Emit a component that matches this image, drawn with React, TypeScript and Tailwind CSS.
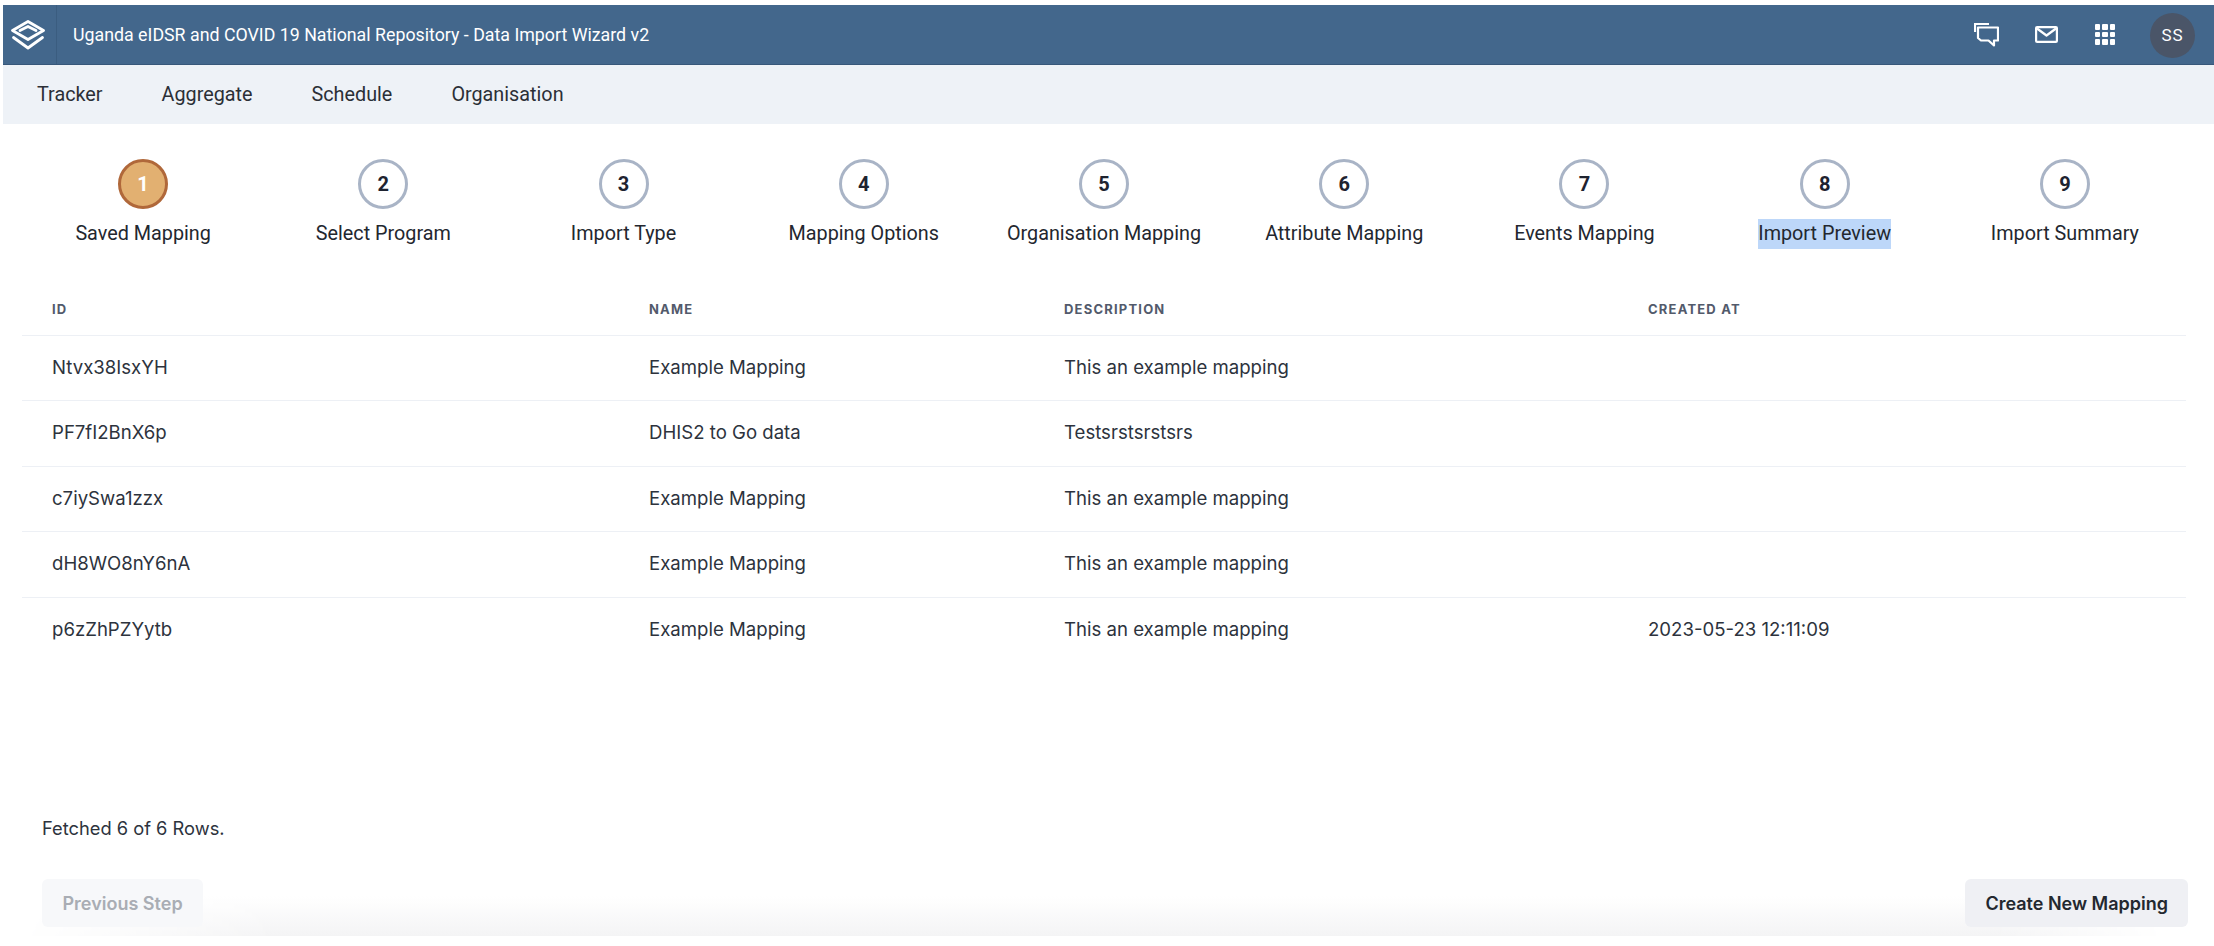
import { ReactNode } from "react";

const steps = [
  "Saved Mapping",
  "Select Program",
  "Import Type",
  "Mapping Options",
  "Organisation Mapping",
  "Attribute Mapping",
  "Events Mapping",
  "Import Preview",
  "Import Summary",
];

const rows = [
  ["Ntvx38IsxYH", "Example Mapping", "This an example mapping", ""],
  ["PF7fI2BnX6p", "DHIS2 to Go data", "Testsrstsrstsrs", ""],
  ["c7iySwa1zzx", "Example Mapping", "This an example mapping", ""],
  ["dH8WO8nY6nA", "Example Mapping", "This an example mapping", ""],
  ["p6zZhPZYytb", "Example Mapping", "This an example mapping", "2023-05-23 12:11:09"],
];

function Logo() {
  return (
    <svg width="34" height="30" viewBox="0 0 34 30" fill="none" stroke="white" strokeWidth="2.8" strokeLinejoin="round" strokeLinecap="round">
      <path d="M17 1.5 L32.5 10.5 L17 19.5 L1.5 10.5 Z" />
      <path d="M9 10.5 L17 6.5 L25 10.5" />
      <path d="M2.5 17.5 L17 28 L31.5 17.5" />
    </svg>
  );
}

function ChatIcon() {
  return (
    <svg width="25" height="24" viewBox="0 0 25 24" fill="none" stroke="white" strokeWidth="2.2">
      <path d="M1 9 V1 H15" />
      <path d="M4 4.5 H24 V17.5 H20 V22.5 L14.5 17.5 H7 L4 15 Z" strokeLinejoin="round" />
    </svg>
  );
}

function MailIcon() {
  return (
    <svg width="23" height="17" viewBox="0 0 23 17" fill="none" stroke="white" strokeWidth="2.2" strokeLinejoin="round">
      <rect x="1.1" y="1.1" width="20.8" height="14.8" rx="1" />
      <path d="M2 2.5 L11.5 9.5 L21 2.5" />
    </svg>
  );
}

function GridIcon() {
  return (
    <div className="grid grid-cols-3 gap-[2px]">
      {Array.from({ length: 9 }).map((_, i) => (
        <span key={i} className="h-[5.5px] w-[5.5px] rounded-[1px] bg-white" />
      ))}
    </div>
  );
}

function Button({ children, disabled }: { children: ReactNode; disabled?: boolean }) {
  return (
    <button
      className={
        disabled
          ? "relative h-[48px] rounded-md bg-[#f7f8fa] px-[20.5px] text-[18px] font-semibold text-[#a9adb4]"
          : "relative h-[48px] rounded-md bg-[#eff0f4] px-[20px] text-[18px] font-semibold text-[#23282f]"
      }
    >
      {children}
    </button>
  );
}

export default function App() {
  return (
    <div className="relative h-[946px] overflow-hidden bg-white pl-[3px] pt-[5px] font-['Roboto',sans-serif]">
      {/* top bar */}
      <header className="flex h-[60px] items-center border-b border-[#37577a] bg-[#43678c] text-white">
        <div className="flex h-full w-[54px] shrink-0 items-center justify-center border-r border-[#3b5d80] pr-[4px]">
          <Logo />
        </div>
        <div className="ml-[16px] pt-[1px] text-[17.8px]">Uganda eIDSR and COVID 19 National Repository - Data Import Wizard v2</div>
        <div className="ml-auto flex items-center pr-[19px]">
          <div className="mr-[36px]"><ChatIcon /></div>
          <div className="mr-[37px]"><MailIcon /></div>
          <div className="mr-[35px]"><GridIcon /></div>
          <div className="mt-[2px] flex h-[45px] w-[45px] items-center justify-center rounded-full bg-[#4a5568] text-[17px] tracking-[1px]">SS</div>
        </div>
      </header>

      {/* nav */}
      <nav className="flex h-[59px] items-center gap-[59px] bg-[#eef2f7] pl-[34px] pt-[1px] text-[19.8px] text-[#2b2f36]">
        <span>Tracker</span>
        <span>Aggregate</span>
        <span>Schedule</span>
        <span>Organisation</span>
      </nav>

      {/* stepper */}
      <div className="ml-[20px] mt-[35px] grid w-[2162px] grid-cols-9">
        {steps.map((step, i) => (
          <div key={step} className="flex flex-col items-center">
            <div
              className={
                i === 0
                  ? "flex h-[50px] w-[50px] items-center justify-center rounded-full border-[3px] border-[#b0683a] bg-[#e2b071] text-[20px] font-bold text-white"
                  : "flex h-[50px] w-[50px] items-center justify-center rounded-full border-[3px] border-[#a9b4c6] bg-white text-[20px] font-bold text-[#1e2330]"
              }
            >
              {i + 1}
            </div>
            <div className="mt-[10px] text-[19.8px] leading-[30px] text-[#23272f]">
              <span className={i === 7 ? "inline-block bg-[#bdd7f9] leading-[30px]" : "inline-block leading-[30px]"}>{step}</span>
            </div>
          </div>
        ))}
      </div>

      {/* table */}
      <table className="ml-[19px] mt-[34px] w-[2164px] table-fixed border-collapse font-['Inter',sans-serif]">
        <thead>
          <tr className="h-[52px] border-b border-[#edf0f5] text-left text-[13px] font-bold tracking-[1.2px] text-[#525a6b]">
            <th className="w-[627px] pl-[30px] pt-[1px] font-bold">ID</th>
            <th className="w-[415px] pt-[1px] font-bold">NAME</th>
            <th className="w-[584px] pt-[1px] font-bold">DESCRIPTION</th>
            <th className="pt-[1px] font-bold">CREATED AT</th>
          </tr>
        </thead>
        <tbody>
          {rows.map((row) => (
            <tr key={row[0]} className="h-[65.5px] border-b border-[#edf0f5] text-[18.6px] text-[#2d333d] last:border-b-0">
              <td className="pl-[30px]">{row[0]}</td>
              <td>{row[1]}</td>
              <td>{row[2]}</td>
              <td>{row[3]}</td>
            </tr>
          ))}
        </tbody>
      </table>

      {/* footer */}
      <div className="absolute inset-x-0 bottom-0 h-[132px] font-['Inter',sans-serif]">
        <div className="absolute bottom-[10px] left-[20px] right-[50px] h-[40px] bg-gradient-to-b from-white to-[#f4f4f5] [mask-image:linear-gradient(90deg,transparent,black_12%,black_92%,transparent)]" />
        <div className="relative pl-[42px] text-[18.3px] leading-[28px] text-[#2d333d]">Fetched 6 of 6 Rows.</div>
        <div className="relative mt-[37px] flex justify-between pl-[42px] pr-[26px]">
          <Button disabled>Previous Step</Button>
          <Button>Create New Mapping</Button>
        </div>
      </div>
    </div>
  );
}
